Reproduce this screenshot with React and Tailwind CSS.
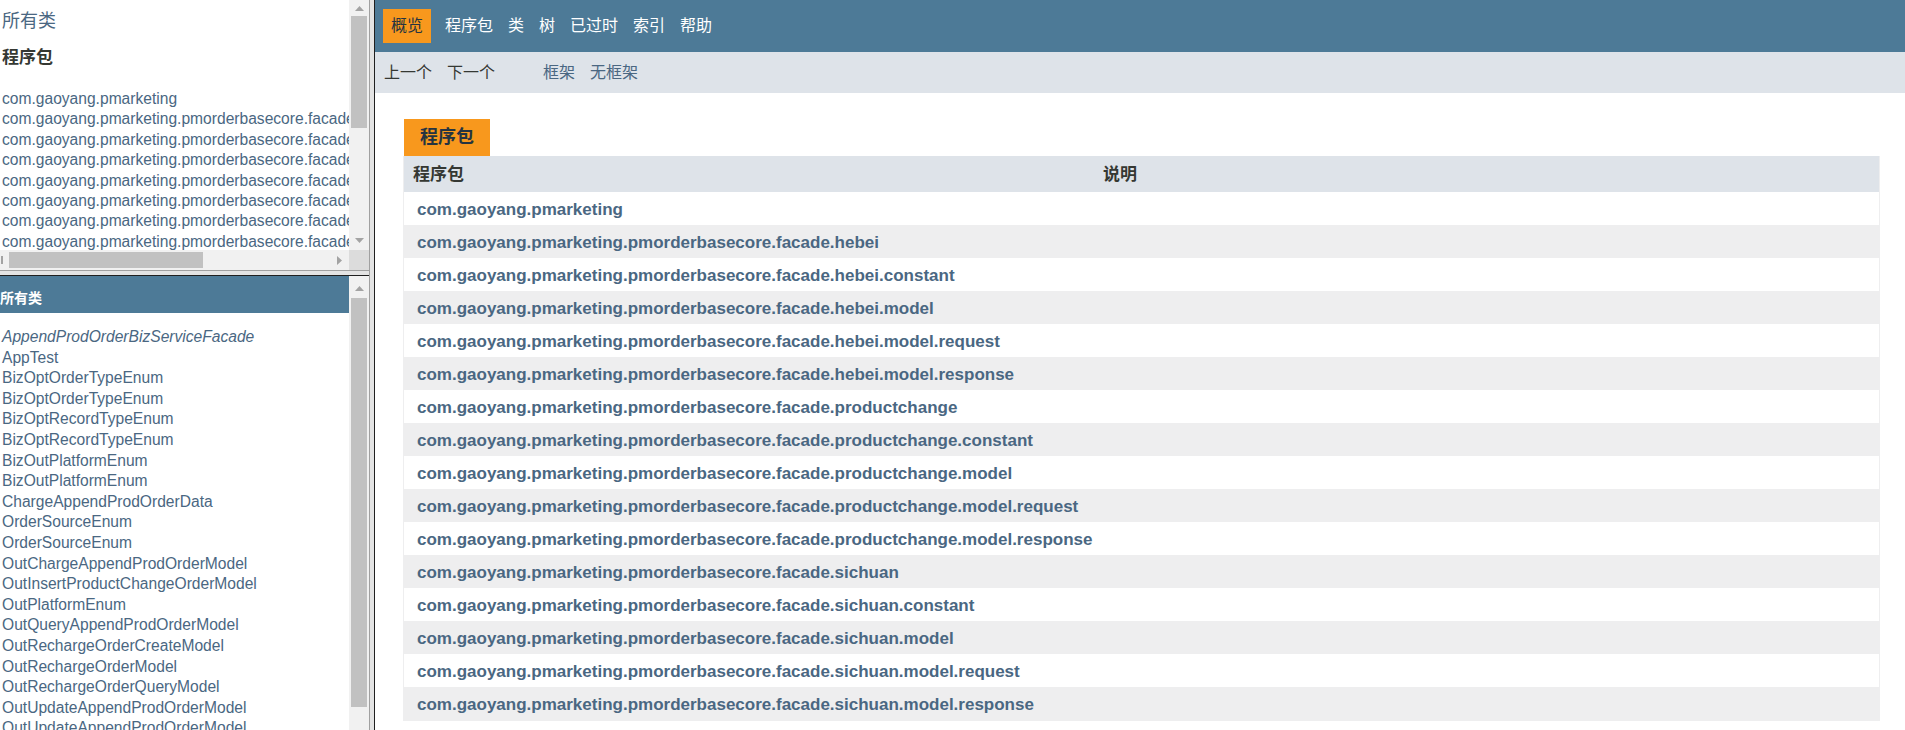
import React from 'react';

const PACKAGES = [
  'com.gaoyang.pmarketing',
  'com.gaoyang.pmarketing.pmorderbasecore.facade.hebei',
  'com.gaoyang.pmarketing.pmorderbasecore.facade.hebei.constant',
  'com.gaoyang.pmarketing.pmorderbasecore.facade.hebei.model',
  'com.gaoyang.pmarketing.pmorderbasecore.facade.hebei.model.request',
  'com.gaoyang.pmarketing.pmorderbasecore.facade.hebei.model.response',
  'com.gaoyang.pmarketing.pmorderbasecore.facade.productchange',
  'com.gaoyang.pmarketing.pmorderbasecore.facade.productchange.constant',
  'com.gaoyang.pmarketing.pmorderbasecore.facade.productchange.model',
  'com.gaoyang.pmarketing.pmorderbasecore.facade.productchange.model.request',
  'com.gaoyang.pmarketing.pmorderbasecore.facade.productchange.model.response',
  'com.gaoyang.pmarketing.pmorderbasecore.facade.sichuan',
  'com.gaoyang.pmarketing.pmorderbasecore.facade.sichuan.constant',
  'com.gaoyang.pmarketing.pmorderbasecore.facade.sichuan.model',
  'com.gaoyang.pmarketing.pmorderbasecore.facade.sichuan.model.request',
  'com.gaoyang.pmarketing.pmorderbasecore.facade.sichuan.model.response',
];

// first entry is an interface, shown in italics
const CLASSES = [
  'AppendProdOrderBizServiceFacade',
  'AppTest',
  'BizOptOrderTypeEnum',
  'BizOptOrderTypeEnum',
  'BizOptRecordTypeEnum',
  'BizOptRecordTypeEnum',
  'BizOutPlatformEnum',
  'BizOutPlatformEnum',
  'ChargeAppendProdOrderData',
  'OrderSourceEnum',
  'OrderSourceEnum',
  'OutChargeAppendProdOrderModel',
  'OutInsertProductChangeOrderModel',
  'OutPlatformEnum',
  'OutQueryAppendProdOrderModel',
  'OutRechargeOrderCreateModel',
  'OutRechargeOrderModel',
  'OutRechargeOrderQueryModel',
  'OutUpdateAppendProdOrderModel',
  'OutUpdateAppendProdOrderModel',
];

const Arrow = ({ dir }) => {
  if (dir === 'right') {
    return (
      <svg width="5" height="9" viewBox="0 0 5 9">
        <path d="M0 0 L5 4.5 L0 9 Z" fill="#a3a3a3" />
      </svg>
    );
  }
  const d = dir === 'up' ? 'M0 5 L4.5 0 L9 5 Z' : 'M0 0 L9 0 L4.5 5 Z';
  return (
    <svg width="9" height="5" viewBox="0 0 9 5">
      <path d={d} fill="#a3a3a3" />
    </svg>
  );
};

const FrameEdgeV = () => (
  <div className="flex shrink-0 h-full">
    <div className="w-[1px] bg-[#a0a0a0]" />
    <div className="w-[4px] bg-[#e3e3e3]" />
    <div className="w-[1px] bg-[#1f1f1f]" />
  </div>
);

const FrameEdgeH = () => (
  <div className="flex flex-col shrink-0 w-full">
    <div className="h-[1px] bg-[#a0a0a0]" />
    <div className="h-[4px] bg-[#e3e3e3]" />
    <div className="h-[1px] bg-[#1f1f1f]" />
  </div>
);

const App = () => {
  return (
    <div className="w-[1905px] h-[730px] flex overflow-hidden bg-white font-['Liberation_Sans','Noto_Sans_CJK_SC',sans-serif] text-[#353833]">
      {/* Left frames */}
      <div className="w-[369px] shrink-0 flex flex-col">
        {/* Package list frame */}
        <div className="h-[270px] shrink-0 flex flex-col">
          <div className="h-[250px] flex">
            <div className="flex-1 overflow-hidden pl-[2px] whitespace-nowrap">
              <div className="mt-[10px] text-[18px] leading-[22px] text-[#4a6782]">所有类</div>
              <h2 className="mt-[15px] text-[17px] leading-[22px] font-bold text-[#353833]">程序包</h2>
              <ul className="mt-[20px] text-[15.6px] leading-[20.4px] text-[#4a6782]">
                {PACKAGES.map((p, i) => (
                  <li key={i}>{p}</li>
                ))}
              </ul>
            </div>
            <div className="w-[20px] shrink-0 bg-[#f1f1f1] flex flex-col">
              <div className="h-[16px] flex items-center justify-center"><Arrow dir="up" /></div>
              <div className="h-[112px] mx-[2px] bg-[#c1c1c1]" />
              <div className="flex-1" />
              <div className="h-[20px] flex items-center justify-center"><Arrow dir="down" /></div>
            </div>
          </div>
          <div className="h-[20px] flex">
            <div className="flex-1 bg-[#f1f1f1] flex items-center">
              <div className="w-[2px] h-[8px] ml-[1px] bg-[#a3a3a3]" />
              <div className="ml-[6px] w-[194px] h-[16px] bg-[#c1c1c1]" />
              <div className="flex-1" />
              <div className="w-[20px] flex justify-center"><Arrow dir="right" /></div>
            </div>
            <div className="w-[20px] bg-[#dcdcdc]" />
          </div>
        </div>

        <FrameEdgeH />

        {/* All classes frame */}
        <div className="flex-1 flex min-h-0">
          <div className="flex-1 overflow-hidden whitespace-nowrap">
            <div className="h-[37px] bg-[#4d7a97] text-white text-[14px] font-bold flex items-center pt-[8px]">
              所有类
            </div>
            <ul className="mt-[14px] pl-[2px] text-[15.6px] leading-[20.6px] text-[#4a6782]">
              {CLASSES.map((c, i) => (
                <li key={i} className={i === 0 ? 'italic' : ''}>{c}</li>
              ))}
            </ul>
          </div>
          <div className="w-[20px] shrink-0 bg-[#f1f1f1] flex flex-col">
            <div className="h-[22px] flex items-center justify-center pt-[2px]"><Arrow dir="up" /></div>
            <div className="h-[409px] mx-[2px] bg-[#c1c1c1]" />
          </div>
        </div>
      </div>

      <FrameEdgeV />

      {/* Main frame */}
      <div className="flex-1 min-w-0 flex flex-col bg-white">
        <div className="h-[52px] shrink-0 bg-[#4d7a97] flex items-center pl-[8px] text-[16px] text-white gap-[15px]">
          <span className="h-[34px] px-[8px] mr-[-1px] bg-[#f8981d] text-[#253441] flex items-center">概览</span>
          <span>程序包</span>
          <span>类</span>
          <span>树</span>
          <span>已过时</span>
          <span>索引</span>
          <span>帮助</span>
        </div>
        <div className="h-[41px] shrink-0 bg-[#dee3e9] flex items-center pl-[9px] text-[16px]">
          <span className="text-[#353833]">上一个</span>
          <span className="ml-[15px] text-[#353833]">下一个</span>
          <span className="ml-[48px] text-[#4a6782]">框架</span>
          <span className="ml-[15px] text-[#4a6782]">无框架</span>
        </div>

        <div className="pt-[26px] pl-[28px] pr-[25px]">
          <div className="ml-[1px] inline-flex h-[37px] items-center px-[16px] bg-[#f8981d] text-[#253441] text-[18px] font-bold">
            程序包
          </div>
          <div className="border-x border-b border-[#eeeeef]">
            <div className="h-[36px] bg-[#dee3e9] flex items-center pt-[1px] text-[17px] font-bold text-[#353833]">
              <div className="w-[689px] pl-[9px]">程序包</div>
              <div className="pl-[10px]">说明</div>
            </div>
            {PACKAGES.map((p, i) => (
              <div
                key={i}
                className={`h-[33px] flex items-center pl-[13px] pt-[3px] text-[17px] font-bold text-[#4a6782] ${i % 2 === 0 ? 'bg-white' : 'bg-[#eeeeef]'}`}
              >
                {p}
              </div>
            ))}
          </div>
        </div>
      </div>
    </div>
  );
};

export default App;
